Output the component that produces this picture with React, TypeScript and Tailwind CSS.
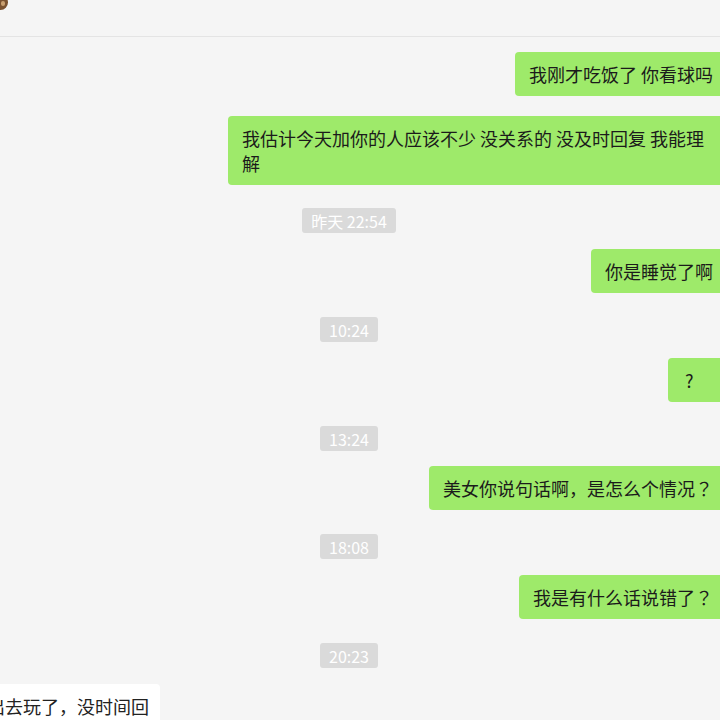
import React from "react";

const font = { fontFamily: '"Microsoft YaHei", "Noto Sans CJK SC", "Noto Sans", sans-serif' };

function Q() {
  return <span className="[font-family:'Noto_Sans_CJK_TC',sans-serif]">？</span>;
}

function Right({ children, className = "", inner = "" }: { children: React.ReactNode; className?: string; inner?: string }) {
  return (
    <div className={`flex justify-end w-[726px] ${className}`}>
      <div className={`bg-[#9eea6a] rounded-[4px] pl-[14px] pr-[13px] pt-[10px] pb-[9px] text-[18px] leading-[25px] text-[#1b1b1b] whitespace-nowrap ${inner}`}>
        {children}
      </div>
    </div>
  );
}

function Time({ children, className = "" }: { children: React.ReactNode; className?: string }) {
  return (
    <div className={`flex justify-center w-[698px] ${className}`}>
      <div className="bg-[#dadada] rounded-[3px] h-[25px] px-[9px] flex items-center text-white text-[16px] leading-none">
        {children}
      </div>
    </div>
  );
}

export default function App() {
  return (
    <div className="w-[720px] h-[720px] overflow-hidden bg-[#f5f5f5] relative" style={font}>
      <div className="h-[37px] border-b border-[#e4e4e4] bg-[#f5f5f5] relative overflow-hidden">
        <div className="absolute -left-[7px] -top-[5px] w-[15px] h-[15px] rounded-full bg-[#7a5230]" />
        <div className="absolute left-[1px] top-[1px] w-[4px] h-[5px] rounded-full bg-[#c9a070]" />
      </div>
      <div className="flex flex-col">
        <Right className="mt-[15px]">我刚才吃饭了 你看球吗</Right>
        <Right className="mt-[20px]">
          <div className="w-[471px] whitespace-normal">
            我估计今天加你的人应该不少 没关系的 没及时回复 我能理
            <br />解
          </div>
        </Right>
        <Time className="mt-[23px]">昨天 22:54</Time>
        <Right className="mt-[16px]">你是睡觉了啊</Right>
        <Time className="mt-[24px]">10:24</Time>
        <Right className="mt-[16px]" inner="w-[58px] !pl-[17px]">?</Right>
        <Time className="mt-[24px]">13:24</Time>
        <Right className="mt-[15px]">美女你说句话啊，是怎么个情况<Q /></Right>
        <Time className="mt-[24px]">18:08</Time>
        <Right className="mt-[16px]">我是有什么话说错了<Q /></Right>
        <Time className="mt-[24px]">20:23</Time>
        <div className="mt-[16px] flex">
          <div className="bg-white rounded-[4px] -ml-[26px] pl-[13px] pr-[11px] pt-[10px] pb-[9px] text-[18px] leading-[25px] text-[#222] whitespace-nowrap">
            出去玩了，没时间回
          </div>
        </div>
      </div>
    </div>
  );
}
